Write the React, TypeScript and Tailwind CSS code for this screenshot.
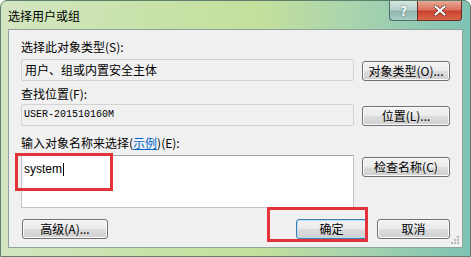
import React from 'react';

function WinButton({
  children,
  className = '',
  primary = false,
}: {
  children: React.ReactNode;
  className?: string;
  primary?: boolean;
}) {
  return (
    <div
      className={`flex h-[20px] shrink-0 items-center justify-center rounded-[3px] border text-[12px] leading-none text-black bg-[linear-gradient(#f3f3f3,#ebebeb_48%,#dddddd_52%,#cfcfcf)] ${
        primary
          ? 'border-[#3c7fb1] shadow-[inset_0_0_0_1px_#b4e0f6]'
          : 'border-[#707070] shadow-[inset_0_0_0_1px_#fbfbfb]'
      } ${className}`}
    >
      {children}
    </div>
  );
}

export default function App() {
  return (
    <div className="relative h-[257px] w-[471px] overflow-hidden font-['Noto_Sans_CJK_SC',sans-serif] text-black">
      <div className="flex h-full w-full flex-col rounded-t-[7px] border border-[#5e7f6c] bg-[linear-gradient(90deg,#d3e6c2_0%,#c9e2aa_30%,#c3e09c_55%,#a9d4ae_75%,#7fc2b4_100%)]">
        {/* title bar */}
        <div className="flex h-[28px] shrink-0 items-start justify-between">
          <span className="pl-[7px] pt-[8px] text-[12px] leading-[13px] text-black">选择用户或组</span>
          <div className="mr-[8px] flex">
            <div className="flex h-[20px] w-[28px] items-center justify-center rounded-bl-[4px] border border-t-0 border-r-0 border-[#4f6f6a] bg-[linear-gradient(#d4e6e2,#b3d0ca_48%,#8fb6ae_52%,#a9cbc3)] text-[13px] font-bold leading-none text-white [text-shadow:0_0_2px_#3f5f5a]">
              ?
            </div>
            <div className="flex h-[20px] w-[45px] items-center justify-center rounded-br-[4px] border border-t-0 border-[#6a2e24] bg-[linear-gradient(#e8a896,#d9705a_48%,#c8412a_52%,#d9664a)]">
              <svg width="12" height="11" viewBox="0 0 12 11">
                <path d="M1.5 1.5 L10.5 9.5 M10.5 1.5 L1.5 9.5" stroke="#5a2a20" strokeWidth="3.4" strokeLinecap="round" />
                <path d="M1.5 1.5 L10.5 9.5 M10.5 1.5 L1.5 9.5" stroke="#ffffff" strokeWidth="2.2" strokeLinecap="round" />
              </svg>
            </div>
          </div>
        </div>

        {/* client area */}
        <div className="relative mx-[7px] flex h-[219px] flex-col border border-[#8fa39a] bg-[#f0f0f0] px-[12px] text-[12px]">
          <div className="mt-[10px] h-[13px] leading-[13px]">选择此对象类型(S):</div>
          <div className="mt-[6px] flex items-end gap-[8px]">
            <div className="flex h-[22px] flex-1 items-center rounded-[2px] border border-[#d2d2d2] bg-[#f0f0f0] pl-[3px] leading-none">
              用户、组或内置安全主体
            </div>
            <WinButton className="w-[88px]">对象类型(O)...</WinButton>
          </div>

          <div className="mt-[6px] h-[13px] leading-[13px]">查找位置(F):</div>
          <div className="mt-[4px] flex items-end gap-[8px]">
            <div className="flex h-[22px] flex-1 items-center rounded-[2px] border border-[#d2d2d2] bg-[#f0f0f0] pl-[2px] font-['Liberation_Mono',monospace] text-[10px] leading-none">
              USER-201510160M
            </div>
            <WinButton className="w-[88px]">位置(L)...</WinButton>
          </div>

          <div className="mt-[10px] h-[13px] leading-[13px]">
            输入对象名称来选择(<span className="text-[#0066cc] underline">示例</span>)(E):
          </div>
          <div className="mt-[6px] flex items-start gap-[8px]">
            <div className="h-[53px] flex-1 border border-[#c4c4c4] border-t-[#a4a4a4] bg-white pl-[2px] pt-[3px]">
              <span className="inline-flex items-center font-['Liberation_Sans',sans-serif] text-[12px] leading-[14px]">
                system
                <span className="ml-[1px] inline-block h-[13px] w-px bg-black" />
              </span>
            </div>
            <WinButton className="mt-[2px] w-[88px]">检查名称(C)</WinButton>
          </div>

          <div className="mt-[11px] flex items-center">
            <WinButton className="ml-px w-[86px]">高级(A)...</WinButton>
            <div className="flex-1" />
            <WinButton primary className="w-[71px]">
              确定
            </WinButton>
            <WinButton className="ml-[10px] w-[73px]">取消</WinButton>
          </div>

          {/* resize grip */}
          <svg className="absolute bottom-[2px] right-[2px]" width="10" height="10" viewBox="0 0 10 10">
            {[
              [8, 2],
              [8, 5],
              [5, 5],
              [8, 8],
              [5, 8],
              [2, 8],
            ].map(([x, y], i) => (
              <rect key={i} x={x - 1} y={y - 1} width="2" height="2" fill="#b8b8b8" />
            ))}
          </svg>
        </div>
      </div>

      {/* red annotation boxes */}
      <div className="absolute left-[15px] top-[153px] h-[38px] w-[98px] border-[3px] border-[#e2333a]" />
      <div className="absolute left-[267px] top-[207px] h-[35px] w-[101px] border-[3px] border-[#e2333a]" />
    </div>
  );
}
